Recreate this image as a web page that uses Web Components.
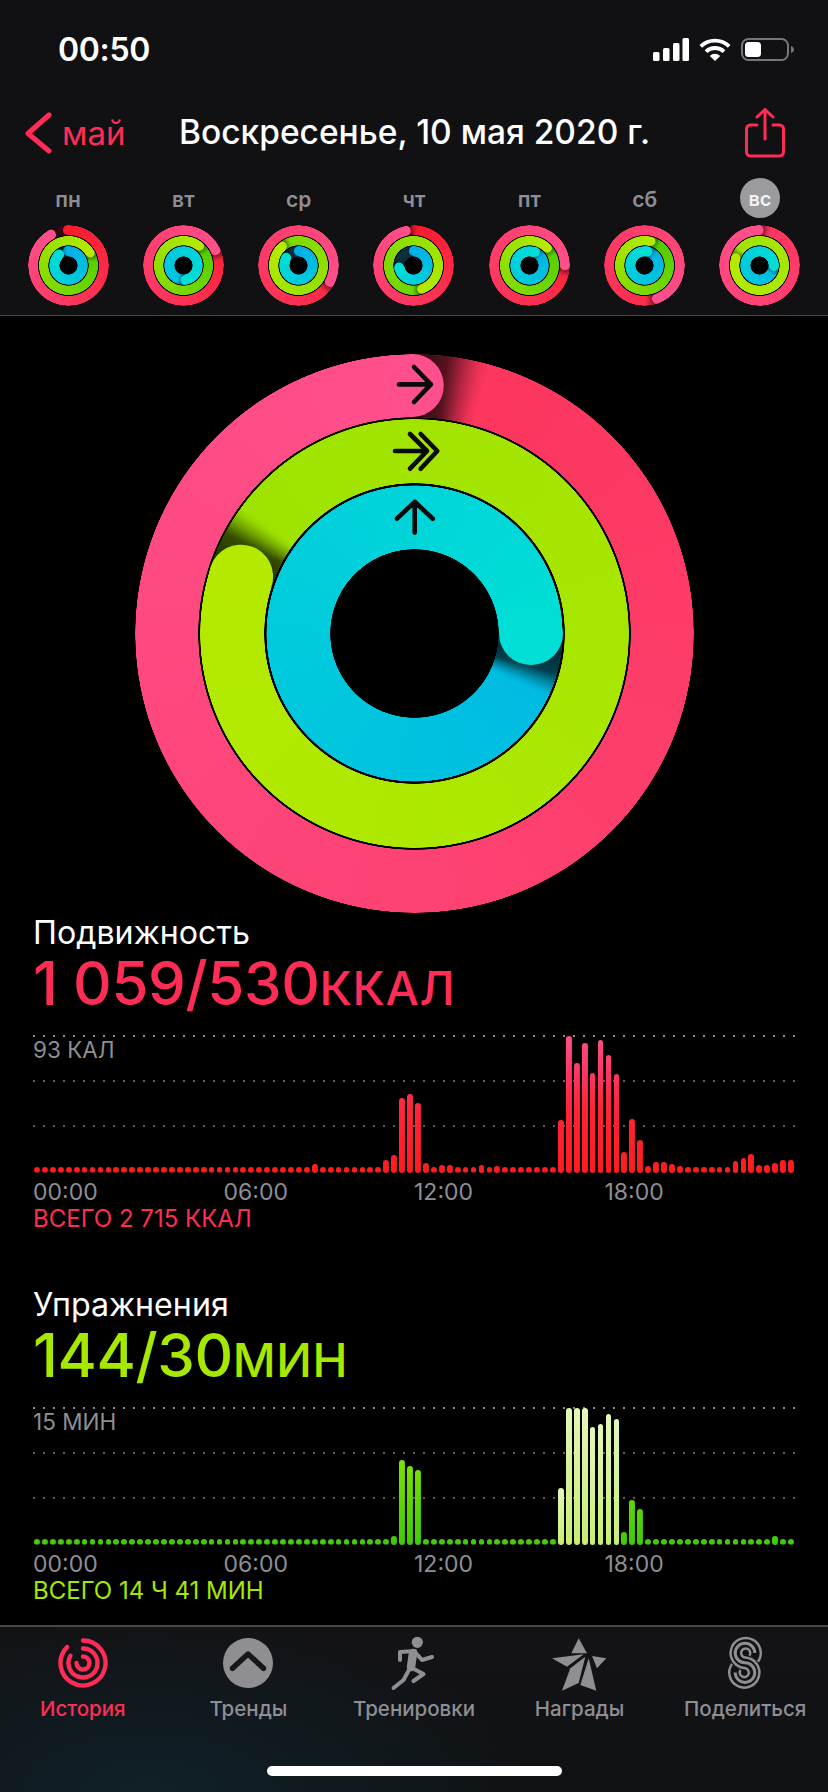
<!DOCTYPE html>
<html lang="ru">
<head>
<meta charset="utf-8">
<title>Активность</title>
<style>
  html, body { margin: 0; padding: 0; background: #000; }
  body { width: 828px; height: 1792px; overflow: hidden; font-family: Inter, "Noto Sans", sans-serif; color: #fff; display: flex; flex-direction: column; }
  main { flex: 1; display: flex; flex-direction: column; min-height: 0; }
</style>
</head>
<body>
<app-header>
  <status-bar time="00:50"></status-bar>
  <nav-row back="май" title="Воскресенье, 10 мая 2020 г."></nav-row>
  <week-strip>
    <day-column label="пн" r="331" g="420" b="318"></day-column>
    <day-column label="вт" r="425" g="400" b="530"></day-column>
    <day-column label="ср" r="478" g="680" b="300"></day-column>
    <day-column label="чт" r="348" g="521" b="260"></day-column>
    <day-column label="пт" r="450" g="406" b="380"></day-column>
    <day-column label="сб" r="520" g="375" b="370"></day-column>
    <day-column label="вс" r="719" g="1728" b="450" active></day-column>
  </week-strip>
</app-header>
<main>
  <big-rings>
    <svg width="559" height="559" viewBox="0 0 559 559" fill="none" stroke="#0a0a0a" stroke-width="4.6" stroke-linecap="round" stroke-linejoin="round" style="display:block">
      <path d="M264 30.4H295.9M279 13L295.9 30.4L279 48"/>
      <path d="M260 97H292M275 80L292 97L275 114.7M285.7 80L302.3 97L285.7 114.7"/>
      <path d="M279.7 178.6V147.8M262 164.7L279.7 147.8L297.8 164.7"/>
    </svg>
  </big-rings>
  <metric-section kind="move" heading="Подвижность" value="1 059/530" unit="ККАЛ" peak="93 КАЛ" total="ВСЕГО 2 715 ККАЛ"></metric-section>
  <metric-section kind="exercise" heading="Упражнения" value="144/30" unit="МИН" peak="15 МИН" total="ВСЕГО 14 Ч 41 МИН"></metric-section>
</main>
<tab-bar>
  <tab-item label="История" active>
    <svg width="50" height="50" viewBox="0 0 50 50" fill="none" stroke="#ff2d55" stroke-width="4.4" stroke-linecap="round">
      <path d="M25 2.5A22.5 22.5 0 1 1 9.1 9.1"/>
      <path d="M25 10.5A14.5 14.5 0 1 1 12.44 17.75"/>
      <path d="M25 18.5A6.5 6.5 0 1 1 18.5 25"/>
    </svg>
  </tab-item>
  <tab-item label="Тренды">
    <svg width="50" height="50" viewBox="0 0 50 50" fill="none">
      <circle cx="25" cy="25" r="25" fill="#8e8e93"/>
      <path d="M9.5 30.3L25 16L40.5 30.3" stroke="#17171a" stroke-width="5.4" stroke-linecap="round" stroke-linejoin="round"/>
    </svg>
  </tab-item>
  <tab-item label="Тренировки">
    <svg width="50" height="50" viewBox="0 0 50 50" fill="none" stroke="#8e8e93" stroke-width="4" stroke-linecap="round" stroke-linejoin="round" style="overflow:visible">
      <circle cx="28.3" cy="4.3" r="5.6" fill="#8e8e93" stroke="none"/>
      <path d="M11 22L11 14L26 13"/>
      <path d="M24 15L22 29" stroke-width="8.5"/>
      <path d="M26 14L33 22L43 19"/>
      <path d="M23 30L34.5 36L24.5 43"/>
      <path d="M21 30L14.5 42L4.5 50"/>
    </svg>
  </tab-item>
  <tab-item label="Награды">
    <svg width="50" height="50" viewBox="0 0 50 50" fill="#8e8e93" style="overflow:visible">
      <path d="M23.7 .3L32 15.3H16.3Z"/>
      <path d="M-3 20.3L28.7 16.3L12 28.7Z"/>
      <path d="M7 52.7L15.3 30.3L30.3 18.7L23.7 45Z"/>
      <path d="M33.7 20.3L41.3 52.7L25.3 47Z"/>
      <path d="M37 18L51.3 20.3L42 30.3Z"/>
    </svg>
  </tab-item>
  <tab-item label="Поделиться">
    <svg width="50" height="50" viewBox="0 0 50 50" fill="none" stroke-linecap="butt" style="overflow:visible">
      <g transform="translate(9.5 -.5)">
        <path d="M24.2 21.2A9.8 9.8 0 1 0 15.5 25.3A9.8 9.8 0 1 1 6.8 29.4" stroke="#8e8e93" stroke-width="13"/>
        <path d="M24.2 21.2A9.8 9.8 0 1 0 15.5 25.3A9.8 9.8 0 1 1 6.8 29.4" stroke="#121215" stroke-width="8"/>
        <path d="M25.3 15.5A9.8 9.8 0 1 0 15.5 25.3A9.8 9.8 0 1 1 5.700 35.1" stroke="#8e8e93" stroke-width="3"/>
      </g>
    </svg>
  </tab-item>
</tab-bar>
<script>
function hex(c){ return [1,3,5].map(i=>parseInt(c.substr(i,2),16)); }
function mix(a,b,t){ const A=hex(a),B=hex(b); return 'rgb('+A.map((v,i)=>Math.round(v+(B[i]-v)*t)).join(',')+')'; }
const RING_PALETTE = {
  red:   {c1:'#fa1b2b', c2:'#ff4f8c', track:'#3a0a14'},
  green: {c1:'#44ca02', c2:'#b5ea00', track:'#123a02'},
  blue:  {c1:'#00b0e6', c2:'#00ded6', track:'#0b2f3e'}
};
function ringsMarkup(R, rows){
  const d = R*2;
  const band = (ri,ro)=>{
    const m = `radial-gradient(circle at center, transparent ${ri-.5}px, #000 ${ri}px, #000 ${ro-.5}px, transparent ${ro}px)`;
    return `-webkit-mask-image:${m};mask-image:${m};`;
  };
  let out = `<div class="layer" style="background:radial-gradient(circle at center,#000 ${rows[0].ri+.5}px,transparent ${rows[0].ri+1}px)"></div>`;
  rows.forEach(r=>{
    const p = RING_PALETTE[r.color], w = r.ro-r.ri, mid=(r.ri+r.ro)/2, a=r.alpha||1;
    const head = r.sweep%360;
    const cap = (angle,color)=>`<div class="layer" style="transform:rotate(${angle}deg)"><div style="width:${w}px;height:${w}px;border-radius:50%;background:${color};margin:${R-r.ro}px auto 0"></div></div>`;
    if(r.sweep>=360){
      const t0=(r.sweep-360)/r.sweep;
      out += `<div class="layer" style="${band(r.ri,r.ro)}background:conic-gradient(from ${head}deg, ${mix(p.c1,p.c2,t0)}, ${p.c2})"></div>`;
    } else {
      out += `<div class="layer" style="${band(r.ri,r.ro)}background:conic-gradient(from 0deg, ${p.c1} 0deg, ${p.c2} ${r.sweep}deg, ${p.track} ${r.sweep}deg, ${p.track} 360deg)"></div>`;
      out += cap(0,p.c1);
    }
    const capA = (w/2)/mid*57.3, shA = r.shadow/mid*57.3;
    out += `<div class="layer" style="${band(r.ri,r.ro)}background:conic-gradient(from ${head}deg, rgba(0,0,0,${.85*a}) 0deg, rgba(0,0,0,${.66*a}) ${capA}deg, rgba(0,0,0,${.28*a}) ${capA+shA*.45}deg, rgba(0,0,0,${.06*a}) ${capA+shA*.8}deg, transparent ${capA+shA}deg, transparent 360deg)"></div>`;
    out += cap(head,p.c2);
  });
  return `<style>
    :host{display:grid;width:${d}px;height:${d}px;flex:none}
    .layer,.over{grid-area:1/1;width:${d}px;height:${d}px}
    .layer{overflow:hidden;border-radius:50%}
    .over{position:relative;z-index:1}
  </style>${out}<div class="over"><slot></slot></div>`;
}
class StatusBar extends HTMLElement{
  connectedCallback(){
    this.attachShadow({mode:'open'}).innerHTML=`<style>
      :host{display:flex;align-items:center;justify-content:space-between;height:100px;padding:0 34px 2px 58px;box-sizing:border-box}
      .t{font-size:32px;font-weight:600;letter-spacing:-.3px;color:#fff}
      .i{display:flex;align-items:center;gap:10px}
      svg{display:block}
    </style>
    <span class="t">${this.getAttribute('time')}</span>
    <span class="i">
      <svg width="36" height="23" viewBox="0 0 36 23" fill="#fff"><rect x="0" y="14" width="6.5" height="9" rx="1.5"/><rect x="10" y="10" width="6.5" height="13" rx="1.5"/><rect x="20" y="5" width="6.5" height="18" rx="1.5"/><rect x="29.5" y="0" width="6.5" height="23" rx="1.5"/></svg>
      <svg width="32" height="23" viewBox="0 0 32 23" fill="none" stroke="#fff" stroke-width="3.8"><path d="M1.8 8.3A20.5 20.5 0 0 1 30.2 8.3"/><path d="M7 13.6A13 13 0 0 1 25 13.6"/><path d="M16 23L10.8 17.9A7.4 7.4 0 0 1 21.2 17.9Z" fill="#fff" stroke="none"/></svg>
      <svg width="53" height="23" viewBox="0 0 53 23" fill="none"><rect x="1" y="1" width="46" height="21" rx="6.5" stroke="#77777b" stroke-width="2"/><rect x="4" y="4" width="16" height="15" rx="3.5" fill="#fff"/><path d="M50 8v7c1.7-.5 3-2 3-3.500s-1.300-3-3-3.500z" fill="#77777b"/></svg>
    </span>`;
  }
}
class NavRow extends HTMLElement{
  connectedCallback(){
    this.attachShadow({mode:'open'}).innerHTML=`<style>
      :host{display:grid;grid-template-columns:155px 1fr 44px;align-items:center;height:66px;padding:0 39px 0 24px;box-sizing:border-box}
      .b{display:flex;align-items:center;gap:10px;color:#ff2d55;font-size:33px}
      .ti{font-size:33.500px;font-weight:500;color:#fff;white-space:nowrap;text-align:left;padding-bottom:2px}
      svg{display:block}
    </style>
    <div class="b"><svg width="28" height="44" viewBox="0 0 28 44" fill="none" stroke="#ff2d55" stroke-width="5" stroke-linecap="round" stroke-linejoin="round"><path d="M25 4L4 22.500L25 40"/></svg><span>${this.getAttribute('back')}</span></div>
    <div class="ti">${this.getAttribute('title')}</div>
    <svg width="40" height="50" viewBox="0 0 40 50" fill="none" stroke="#ff2d55" stroke-width="3" stroke-linecap="round" stroke-linejoin="round"><path d="M12 17H5.500A4 4 0 0 0 1.500 21V44A4 4 0 0 0 5.500 48H34.500A4 4 0 0 0 38.500 44V21A4 4 0 0 0 34.500 17H28"/><path d="M20 31V2M12 9L20 1.500L28 9"/></svg>`;
  }
}
class AppHeader extends HTMLElement{
  connectedCallback(){
    this.attachShadow({mode:'open'}).innerHTML=`<style>
      :host{display:block;background:#111114;border-bottom:1px solid #4a4a4c;height:316px;box-sizing:border-box;flex:none}
    </style><slot></slot>`;
  }
}
class WeekStrip extends HTMLElement{
  connectedCallback(){
    this.attachShadow({mode:'open'}).innerHTML=`<style>
      :host{display:flex;justify-content:space-between;padding:12px 27.500px 0}
    </style><slot></slot>`;
  }
}
class DayColumn extends HTMLElement{
  connectedCallback(){
    const g=a=>+this.getAttribute(a);
    const rows=[
      {color:'red',ri:30.7,ro:40.5,sweep:g('r'),shadow:7,alpha:.6},
      {color:'green',ri:20.4,ro:29.7,sweep:g('g'),shadow:5,alpha:.5},
      {color:'blue',ri:9.3,ro:19.4,sweep:g('b'),shadow:4,alpha:.5}
    ];
    const active=this.hasAttribute('active');
    this.attachShadow({mode:'open'}).innerHTML=`<style>
      :host{display:flex;flex-direction:column;align-items:center;gap:7px;width:81px}
      .l{height:40px;width:40px;border-radius:50%;display:flex;align-items:center;justify-content:center;font-size:${active?20:21}px;font-weight:600;color:#8e8e93;line-height:1}
      .l span{padding-top:${active?2:3}px}
      .l.a{background:#9a9a9f;color:#f2f2f4}
    </style><div class="l${active?' a':''}"><span>${this.getAttribute('label')}</span></div><ring-set></ring-set>`;
    this.shadowRoot.querySelector('ring-set').setRows(40.5,rows);
  }
}
class RingSet extends HTMLElement{
  setRows(R,rows){
    if(!this.shadowRoot) this.attachShadow({mode:'open'});
    this.shadowRoot.innerHTML=ringsMarkup(R,rows);
  }
}
class BigRings extends HTMLElement{
  connectedCallback(){
    this.attachShadow({mode:'open'}).innerHTML=`<style>:host{display:flex;justify-content:center;padding:38px 0 1px;flex:none}</style><ring-set><slot></slot></ring-set>`;
    this.shadowRoot.querySelector('ring-set').setRows(279.5,[
      {color:'red',ri:216.5,ro:279.5,sweep:719.5,shadow:38},
      {color:'green',ri:150.5,ro:214.5,sweep:1728,shadow:26},
      {color:'blue',ri:84.5,ro:148.2,sweep:450,shadow:20}
    ]);
  }
}
const CHART_DATA={
  move:{35:9.3,44:13,45:18,46:75,47:79,48:70,49:10,51:8,52:8,56:8,58:7,66:53,67:137,68:110,69:130,70:100,71:133,72:118,73:99,74:21,75:54,76:33,77:7,78:11,79:11,80:9,81:7,88:12,89:15,90:19,91:8,92:8,93:10,94:13,95:13},
  exercise:{45:9,46:85,47:79,48:75,66:57,67:137,68:137,69:137,70:118,71:121,72:131,73:126,74:13,75:45,76:36,93:9}
};
class BarChart extends HTMLElement{
  connectedCallback(){
    const kind=this.getAttribute('kind'), data=CHART_DATA[kind];
    let bars='';
    for(let i=0;i<96;i++){
      const h=data[i]||5.6;
      const light=kind==='exercise'&&i>=66&&i<=73;
      bars+=`<i class="${light?'lt':''}" style="height:${h}px"></i>`;
    }
    const grad = kind==='move'
      ? 'linear-gradient(to top,#ff1c1c 0,#ff2438 45%,#ff2f57 65%,#ff4f8c 100%)'
      : 'linear-gradient(to top,#3dcb0c 0,#5dd606 50%,#7fe300 100%)';
    const size = kind==='move'?138:88;
    this.attachShadow({mode:'open'}).innerHTML=`<style>
      :host{display:grid;height:138px}
      .g,.n,.b{grid-area:1/1}
      .g{display:flex;flex-direction:column;gap:43px}
      .g u{display:block;height:2px;background:linear-gradient(90deg,#8a8a8a 2px,transparent 2px) 0 0/10px 2px repeat-x}
      .g u+u{background-image:linear-gradient(90deg,#5e5e5e 2px,transparent 2px)}
      .n{font-size:22.500px;line-height:26px;padding-top:2px;color:#8e8e93}
      .b{display:grid;grid-template-columns:repeat(96,1fr);align-items:end;justify-items:center}
      i{display:block;width:5.800px;border-radius:3px;background:${grad} bottom/100% ${size}px no-repeat}
      i.lt{background:linear-gradient(to top,#c6ef72,#e3f7ba)}
    </style>
    <div class="g"><u></u><u></u><u></u></div>
    <div class="n">${this.getAttribute('peak')}</div>
    <div class="b">${bars}</div>`;
  }
}
class MetricSection extends HTMLElement{
  connectedCallback(){
    const k=this.getAttribute('kind');
    const col=k==='move'?'#ff2d55':'#a6e800';
    this.attachShadow({mode:'open'}).innerHTML=`<style>
      :host{display:block;padding:0 33px;margin-bottom:54px;flex:none}
      .h{font-size:32.200px;line-height:38px;height:38px;color:#fff}
      .v{font-size:60px;line-height:62px;height:60px;color:${col};font-weight:500;white-space:nowrap;margin-bottom:23px;letter-spacing:-.4px}
      .v small{font-size:47px;line-height:0;font-weight:500;letter-spacing:.7px}
      .x{display:grid;grid-template-columns:repeat(4,1fr);font-size:23px;line-height:26px;color:#8e8e93;margin-top:6px}
      .t{font-size:24px;line-height:26px;color:${col};margin-top:1px}
    </style>
    <div class="h">${this.getAttribute('heading')}</div>
    <div class="v">${this.getAttribute('value')}<small>${this.getAttribute('unit')}</small></div>
    <bar-chart kind="${k}" peak="${this.getAttribute('peak')}"></bar-chart>
    <div class="x"><span>00:00</span><span>06:00</span><span>12:00</span><span>18:00</span></div>
    <div class="t">${this.getAttribute('total')}</div>`;
  }
}
class TabBar extends HTMLElement{
  connectedCallback(){
    this.attachShadow({mode:'open'}).innerHTML=`<style>
      :host{display:flex;flex-direction:column;height:167px;box-sizing:border-box;border-top:2px solid #48484a;flex:none;
        background:radial-gradient(ellipse 380px 170px at 18% 100%,#0f2127 0,rgba(15,33,39,0) 100%),linear-gradient(#131316,#101214)}
      .r{display:grid;grid-template-columns:repeat(5,1fr);padding-top:11px}
      .h{margin:auto auto 16px;width:295px;height:10px;border-radius:5px;background:#fff}
    </style><div class="r"><slot></slot></div><div class="h"></div>`;
  }
}
class TabItem extends HTMLElement{
  connectedCallback(){
    const a=this.hasAttribute('active');
    this.attachShadow({mode:'open'}).innerHTML=`<style>
      :host{display:flex;flex-direction:column;align-items:center;gap:6px}
      .ic{width:50px;height:52px;display:block}
      .l{font-size:20.500px;line-height:26px;font-weight:500;color:${a?'#ff2d55':'#8e8e93'};white-space:nowrap}
    </style><div class="ic"><slot></slot></div><div class="l">${this.getAttribute('label')}</div>`;
  }
}
customElements.define('ring-set',RingSet);
customElements.define('status-bar',StatusBar);
customElements.define('nav-row',NavRow);
customElements.define('app-header',AppHeader);
customElements.define('week-strip',WeekStrip);
customElements.define('day-column',DayColumn);
customElements.define('big-rings',BigRings);
customElements.define('bar-chart',BarChart);
customElements.define('metric-section',MetricSection);
customElements.define('tab-bar',TabBar);
customElements.define('tab-item',TabItem);
</script>
</body>
</html>
